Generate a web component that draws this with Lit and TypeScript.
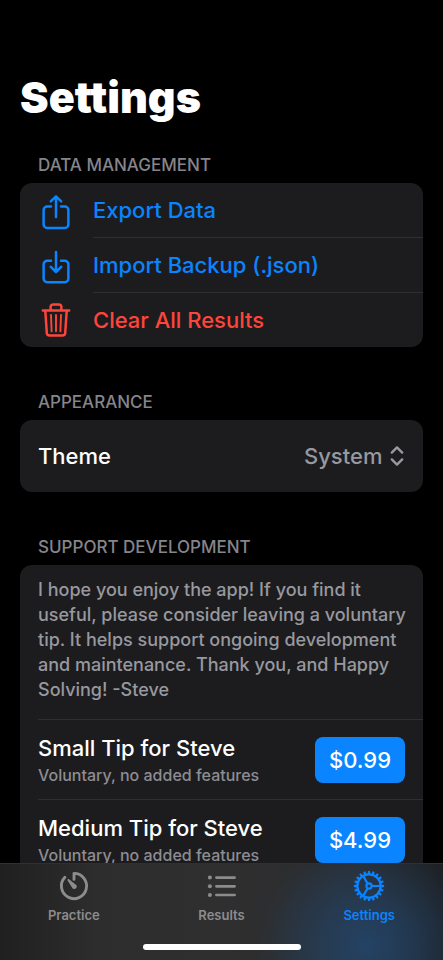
import { LitElement, html, css, svg } from "lit";
import { customElement } from "lit/decorators.js";
import { classMap } from "lit/directives/class-map.js";

const exportIcon = html`<svg class="glyph" viewBox="0 0 30 36" aria-hidden="true">
  <path d="M10 12.6H6.2A3.6 3.6 0 0 0 2.6 16.2V30.4A3.6 3.6 0 0 0 6.2 34H23.8A3.6 3.6 0 0 0 27.4 30.4V16.2A3.6 3.6 0 0 0 23.8 12.6H20M15 23V2.6M9.8 7.4L15 2.3L20.2 7.4" />
</svg>`;

const importIcon = html`<svg class="glyph" viewBox="0 0 30 36" aria-hidden="true">
  <path d="M10 11.8H6.2A3.6 3.6 0 0 0 2.6 15.4V29.6A3.6 3.6 0 0 0 6.2 33.2H23.8A3.6 3.6 0 0 0 27.4 29.6V15.4A3.6 3.6 0 0 0 23.8 11.8H20M15 3V22.8M9.8 17.8L15 23L20.2 17.8" />
</svg>`;

const trashIcon = html`<svg class="glyph" viewBox="0 1.2 30 36" aria-hidden="true">
  <path d="M1.8 8.6H28.2M9.6 8.2V5.2A2.6 2.6 0 0 1 12.2 2.6H17.8A2.6 2.6 0 0 1 20.4 5.2V8.2M4.3 9L5.8 31.2A2.8 2.8 0 0 0 8.6 33.8H21.4A2.8 2.8 0 0 0 24.2 31.2L25.7 9" />
  <path class="thin" d="M10 13.2L10.6 29.4M15 13.2V29.4M20 13.2L19.4 29.4" />
</svg>`;

const timerIcon = html`<svg class="tab-glyph" viewBox="0 0 32 32" aria-hidden="true">
  <path class="timer-ring" d="M16 9.4V3.4A12.6 12.6 0 1 1 6.9 7.3" />
  <path class="solid" d="M9.7 9.3C10.1 8.9 10.5 8.9 11 9.2L17.3 14.2A2.5 2.5 0 1 1 14 17.5L9.6 10.5C9.3 10 9.3 9.7 9.7 9.3Z" />
</svg>`;

const listIcon = html`<svg class="tab-glyph" viewBox="0 0 32 32" aria-hidden="true">
  <path class="list-lines" d="M10.4 7.6H28.6M10.4 16.3H28.6M10.4 25H28.6" />
  <circle class="solid" cx="3.9" cy="7.6" r="2" />
  <circle class="solid" cx="3.9" cy="16.3" r="2" />
  <circle class="solid" cx="3.9" cy="25" r="2" />
</svg>`;

const gearTeeth = Array.from(
  { length: 20 },
  (_, i) => svg`<path class="solid" d="M14.6 4.2L15 0.9H17L17.4 4.2Z" transform="rotate(${i * 18} 16 16)" />`,
);

const gearIcon = html`<svg class="tab-glyph" viewBox="0 0 32 32" aria-hidden="true">
  ${gearTeeth}
  <circle class="gear-line" cx="16" cy="16" r="11.6" />
  <circle class="gear-line" cx="16" cy="16" r="2.6" />
  <path class="gear-line" d="M18.8 16H27M14.6 13.6L10.5 6.5M14.6 18.4L10.5 25.5" />
</svg>`;

const actions = [
  { label: "Export Data", icon: exportIcon, danger: false },
  { label: "Import Backup (.json)", icon: importIcon, danger: false },
  { label: "Clear All Results", icon: trashIcon, danger: true },
];

const tips = [
  { name: "Small Tip for Steve", price: "$0.99" },
  { name: "Medium Tip for Steve", price: "$4.99" },
];

const tabs = [
  { label: "Practice", icon: timerIcon, current: false },
  { label: "Results", icon: listIcon, current: false },
  { label: "Settings", icon: gearIcon, current: true },
];

@customElement("app-root")
export class AppRoot extends LitElement {
  static styles = css`
    :host {
      display: flex;
      flex-direction: column;
      height: 100vh;
      background: #000;
      color: #fff;
      font-family: Inter, "Liberation Sans", sans-serif;
      font-size: 22px;
      font-weight: 500;
    }
    * {
      box-sizing: border-box;
    }
    button,
    select {
      font: inherit;
      color: inherit;
      border: 0;
      margin: 0;
      padding: 0;
      background: none;
    }
    main {
      flex: 1;
      min-height: 0;
      overflow-y: auto;
      scrollbar-width: none;
      padding: 69px 20px 0;
    }
    h1 {
      margin: 0 0 30px;
      font-size: 43px;
      line-height: 56px;
      font-weight: 900;
    }
    section + section {
      margin-top: 45px;
    }
    h2 {
      margin: 0;
      padding: 0 18px 8px;
      font-size: 17px;
      line-height: 20px;
      font-weight: 500;
      color: #85858b;
    }
    .card {
      background: #1c1c1e;
      border-radius: 12px;
      overflow: hidden;
    }
    .action {
      display: flex;
      align-items: center;
      gap: 19px;
      width: 100%;
      padding-left: 18px;
      color: #0a84ff;
      text-align: left;
    }
    .action.danger {
      color: #ff453a;
    }
    .slot {
      display: flex;
      justify-content: center;
      width: 36px;
      padding-top: 2px;
    }
    .glyph {
      width: 30px;
      height: 36px;
      fill: none;
      stroke: currentColor;
      stroke-width: 2.5;
      stroke-linecap: round;
      stroke-linejoin: round;
    }
    .thin {
      stroke-width: 1.9;
    }
    .action-label {
      flex: 1;
      line-height: 54px;
      border-bottom: 1px solid #2f2f32;
    }
    .danger .action-label {
      border-bottom: 0;
    }
    .theme {
      display: flex;
      align-items: center;
      justify-content: space-between;
      height: 72px;
      padding: 0 18px;
    }
    .picker {
      display: flex;
      align-items: center;
      gap: 6px;
      color: #98989f;
    }
    select {
      appearance: none;
    }
    .chevrons {
      width: 16px;
      height: 22px;
      fill: none;
      stroke: currentColor;
      stroke-width: 2.4;
      stroke-linecap: round;
      stroke-linejoin: round;
    }
    .note {
      margin: 0 0 0 18px;
      padding: 12px 10px 17px 0;
      font-size: 18px;
      line-height: 25px;
      color: #98989f;
    }
    .tip {
      display: flex;
      align-items: center;
      justify-content: space-between;
      margin-left: 18px;
      padding: 13px 18px 12px 0;
      border-top: 1px solid #2f2f32;
    }
    .tip-name {
      line-height: 30px;
    }
    .tip-sub {
      font-size: 16px;
      line-height: 24px;
      color: #8d8d93;
    }
    .price {
      height: 46px;
      padding: 0 14px;
      border-radius: 8px;
      background: #0a84ff;
    }
    nav {
      display: flex;
      flex-direction: column;
      align-items: center;
      justify-content: space-between;
      height: 97px;
      padding: 6px 0 10px;
      border-top: 1px solid #303032;
      background:
        radial-gradient(circle 110px at 83% 85%, #23456ae6, #23456a99 40%, #23456a00),
        linear-gradient(90deg, #202021, #2d2d2e 22%, #2f2f30 50%, #2a2b2d 80%, #1d1f22);
    }
    .tabs {
      display: flex;
      align-self: stretch;
    }
    .tab {
      flex: 1;
      display: flex;
      flex-direction: column;
      align-items: center;
      gap: 5px;
      color: #8c8c8e;
      font-size: 13px;
      line-height: 16px;
      font-weight: 600;
      text-decoration: none;
    }
    .tab.current {
      color: #0a84ff;
    }
    .tab-glyph {
      width: 32px;
      height: 32px;
      fill: none;
      stroke: currentColor;
    }
    .solid {
      fill: currentColor;
      stroke: none;
    }
    .timer-ring {
      stroke-width: 2.9;
      stroke-linecap: round;
      stroke-linejoin: round;
    }
    .list-lines {
      stroke-width: 2.7;
      stroke-linecap: round;
    }
    .gear-line {
      stroke-width: 2.2;
    }
    .home-bar {
      width: 158px;
      height: 6px;
      border-radius: 3px;
      background: #fff;
    }
  `;

  render() {
    return html`
      <main>
        <h1>Settings</h1>
        <section>
          <h2>DATA MANAGEMENT</h2>
          <div class="card">
            ${actions.map(
              (a) => html`<button type="button" class=${classMap({ action: true, danger: a.danger })}>
                <span class="slot">${a.icon}</span><span class="action-label">${a.label}</span>
              </button>`,
            )}
          </div>
        </section>
        <section>
          <h2>APPEARANCE</h2>
          <div class="card theme">
            <label for="theme">Theme</label>
            <span class="picker">
              <select id="theme">
                <option>System</option>
              </select>
              <svg class="chevrons" viewBox="0 0 16 22" aria-hidden="true">
                <path d="M2.8 7.6L8 2.4L13.2 7.6M2.8 14.4L8 19.6L13.2 14.4" />
              </svg>
            </span>
          </div>
        </section>
        <section>
          <h2>SUPPORT DEVELOPMENT</h2>
          <div class="card">
            <p class="note">
              I hope you enjoy the app! If you find it useful, please consider leaving a voluntary tip. It helps support
              ongoing development and maintenance. Thank you, and Happy Solving! -Steve
            </p>
            ${tips.map(
              (t) => html`<div class="tip">
                <div>
                  <div class="tip-name">${t.name}</div>
                  <div class="tip-sub">Voluntary, no added features</div>
                </div>
                <button type="button" class="price">${t.price}</button>
              </div>`,
            )}
          </div>
        </section>
      </main>
      <nav>
        <div class="tabs">
          ${tabs.map(
            (t) => html`<a href="#" class=${classMap({ tab: true, current: t.current })}>${t.icon}<span>${t.label}</span></a>`,
          )}
        </div>
        <div class="home-bar"></div>
      </nav>
    `;
  }
}
